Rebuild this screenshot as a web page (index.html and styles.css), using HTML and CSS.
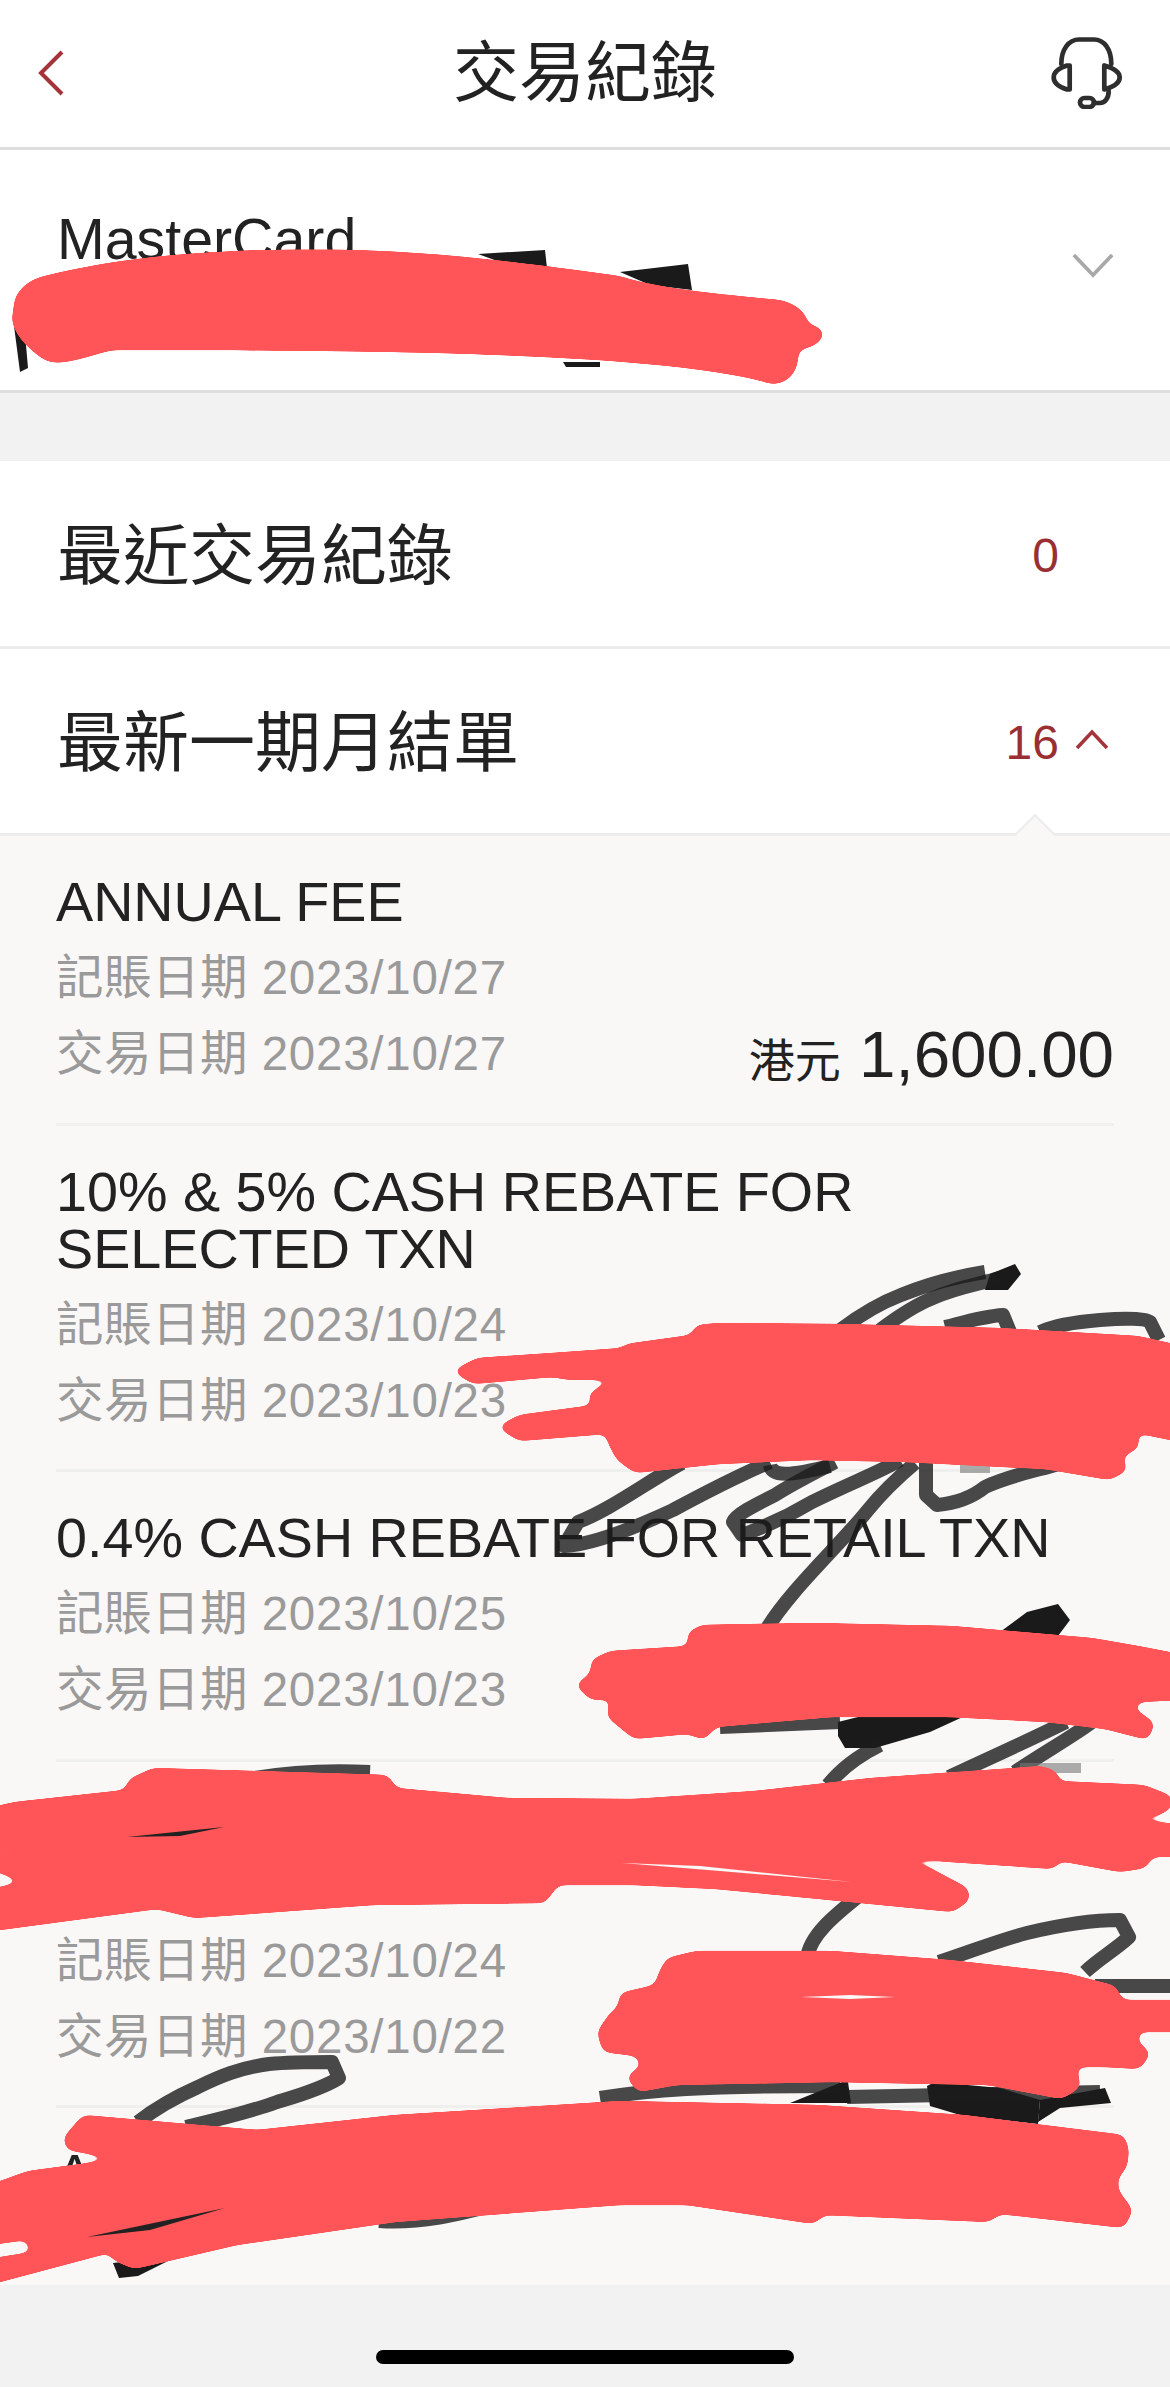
FILE: index.html
```html
<!DOCTYPE html>
<html lang="zh-Hant">
<head>
<meta charset="utf-8">
<title>交易紀錄</title>
<link rel="stylesheet" href="styles.css">
</head>
<body>
<div class="page">
  <header class="nav">
    <svg class="nav-back" viewBox="0 0 26 46" width="26" height="46"><path d="M24 2 L3 23 L24 44" fill="none" stroke="#a5343a" stroke-width="4"/></svg>
    <h1 class="nav-title">交易紀錄</h1>
    <svg class="nav-help" viewBox="0 0 72 72" width="72" height="72"><g fill="none" stroke="#2e2e2e" stroke-width="4.7" stroke-linecap="round" stroke-linejoin="round"><path d="M10.3 27 C10.3 12 18 2.5 28 2.5 H43 C53 2.5 60.3 12 60.3 27"/><path d="M18.7 28.5 V52.5 H16 C8 50 2.7 46 2.7 40.5 C2.7 35 8 31 16 28.5Z"/><path d="M53.3 28.5 V52.5 C62 50 68.7 46 68.7 40.5 C68.7 35 62 31 53.3 28.5Z"/><path d="M57.7 54 C57.7 61 54 66 49 66 H42.7"/><rect x="29" y="61" width="14" height="9" rx="4.5"/></g></svg>
  </header>

  <section class="card-select">
    <span class="card-name">MasterCard</span>
    <svg class="chev-gray" viewBox="0 0 46 28" width="42" height="26"><path d="M2 3 L23 25 L44 3" fill="none" stroke="#a8a8a8" stroke-width="4"/></svg>
  </section>

  <section class="group">
    <div class="summary summary-first">
      <span class="summary-label">最近交易紀錄</span>
      <span class="summary-count count-plain">0</span>
    </div>
    <div class="summary summary-second">
      <span class="summary-label">最新一期月結單</span>
      <span class="summary-count">16</span>
      <svg class="chev-red" viewBox="0 0 34 22" width="34" height="22"><path d="M2 20 L17 4 L32 20" fill="none" stroke="#a5343a" stroke-width="3.5"/></svg>
      <span class="notch"></span>
    </div>
  </section>

  <main class="list">
    <article class="row">
      <div class="row-title">ANNUAL FEE</div>
      <div class="row-date">記賬日期 <span class="row-num">2023/10/27</span></div>
      <div class="row-bottom">
        <div class="row-date">交易日期 <span class="row-num">2023/10/27</span></div>
        <div class="amount"><span class="currency">港元</span> 1,600.00</div>
      </div>
    </article>
    <article class="row">
      <div class="row-title">10% &amp; 5% CASH REBATE FOR<br>SELECTED TXN</div>
      <div class="row-date">記賬日期 <span class="row-num">2023/10/24</span></div>
      <div class="row-date">交易日期 <span class="row-num">2023/10/23</span></div>
    </article>
    <article class="row">
      <div class="row-title">0.4% CASH REBATE FOR RETAIL TXN</div>
      <div class="row-date">記賬日期 <span class="row-num">2023/10/25</span></div>
      <div class="row-date">交易日期 <span class="row-num">2023/10/23</span></div>
    </article>
    <article class="row">
      <div class="row-title">&nbsp;<br>&nbsp;</div>
      <div class="row-date">記賬日期 <span class="row-num">2023/10/24</span></div>
      <div class="row-date">交易日期 <span class="row-num">2023/10/22</span></div>
    </article>
    <article class="row row-last">
      <div class="row-title">A</div>
    </article>
  </main>

  <footer class="home"><span class="home-bar"></span></footer>

  <svg class="scribble" viewBox="0 0 1170 2387" width="1170" height="2387" aria-hidden="true">
    <defs>
      <filter id="soft" filterUnits="userSpaceOnUse" x="-60" y="0" width="1300" height="2387" color-interpolation-filters="sRGB">
        <feGaussianBlur stdDeviation="5"/>
        <feColorMatrix type="matrix" values="1 0 0 0 0  0 1 0 0 0  0 0 1 0 0  0 0 0 22 -10"/>
      </filter>
    </defs>
    <g class="ink-fill">
      <path d="M478 254 L545 250 L547 268 L500 262Z"/>
      <path d="M620 272 L688 264 L692 290 L650 285Z"/>
      <path d="M14 326 L28 326 L26 345 L28 368 L20 372Z"/>
      <path d="M563 362 L600 362 L600 367 L566 367Z"/>
      <path d="M990 1274 L1015 1264 L1021 1274 L1008 1290 L985 1290Z"/>
      <path d="M1000 1632 L1027 1612 L1058 1604 L1070 1620 L1058 1636 L1030 1638Z"/>
      <path d="M838 1722 L870 1714 L965 1716 L930 1732 L875 1748 L845 1748 L838 1736Z"/>
      <path d="M842 2082 L848 2082 L851 2103 L790 2103Z"/>
      <path d="M927 2086 L935 2082 L1000 2088 L1040 2100 L1038 2124 L960 2115 L930 2106Z"/>
      <path d="M1040 2100 L1105 2088 L1111 2103 L1060 2108 L1038 2122Z"/>
      <path d="M113 2263 L180 2255 L138 2276 L119 2278Z"/>
    </g>
    <g class="ink">
      <path d="M840 1330 C860 1315 880 1303 901 1295 C930 1283 960 1276 985 1272"/>
      <path d="M880 1330 C900 1315 915 1305 933 1298 C955 1288 975 1285 1000 1278"/>
      <path d="M945 1327 C965 1322 985 1316 1003 1315 L1010 1332"/>
      <path d="M1040 1332 C1055 1325 1075 1322 1100 1320 C1125 1318 1145 1318 1150 1322 L1159 1340"/>
      <path d="M682 1463 C650 1480 610 1510 578 1522 L564 1546 C590 1545 630 1530 673 1510 C710 1490 740 1475 770 1462"/>
      <path d="M770 1465 C772 1477 790 1476 830 1466"/>
      <path d="M835 1462 C810 1475 790 1485 775 1495 C755 1505 735 1515 733 1522 L742 1535 C770 1525 790 1515 812 1502 C850 1483 880 1472 900 1460"/>
      <path d="M915 1463 C895 1480 880 1495 868 1510 C840 1545 790 1590 766 1630"/>
      <path d="M926 1462 L926 1495 L937 1505 C960 1503 975 1495 985 1487 C1010 1475 1040 1470 1062 1463"/>
      <path d="M840 1722 L720 1727"/>
      <path d="M828 1785 C840 1770 860 1755 880 1745"/>
      <path d="M949 1777 C985 1760 1030 1740 1066 1722"/>
      <path d="M1015 1772 C1040 1755 1075 1735 1092 1722"/>
      <path d="M860 1895 C835 1915 810 1935 807 1958"/>
      <path d="M880 1855 L915 1865"/>
      <path d="M939 1962 C975 1950 1000 1940 1027 1933 C1060 1925 1090 1920 1120 1920 L1129 1937 C1115 1950 1100 1958 1085 1972"/>
      <path d="M1095 1986 L1175 1986"/>
      <path d="M600 2098 C650 2090 700 2086 840 2086"/>
      <path d="M847 2097 L1100 2092"/>
      <path d="M255 1778 C290 1772 330 1770 370 1772"/>
      <path d="M138 2122 C160 2105 180 2095 198 2087 C220 2076 240 2068 269 2064 C290 2062 310 2062 332 2062 L339 2078 C320 2090 290 2098 277 2102 C250 2112 215 2120 186 2127"/>
      <path d="M379 2221 C420 2224 460 2214 494 2205"/>
    </g>
    <path class="ink-light" d="M960 1468 L990 1468"/>
    <path class="ink-light" d="M1020 1768 L1081 1768"/>
    <g class="paint" filter="url(#soft)">
      <path d="M45 276 C130 255 230 248 350 250 C450 252 560 268 619 276 C650 286 690 292 780 300 C800 305 808 315 808 325 C830 325 830 345 798 350 C800 370 790 384 772 384 C720 368 620 360 522 356 C400 350 200 350 112 350 C90 355 60 368 45 360 C15 340 8 320 14 310 C12 295 25 280 45 276 Z"/>
      <path d="M452 1371 L477 1358 L552 1353 L622 1348 L626 1344 L691 1335 L696 1325 L719 1323 L840 1324 L999 1328 L1138 1336 L1200 1350 L1200 1398 L1170 1399 L1159 1403 L1200 1412 L1200 1446 L1136 1433 L1140 1447 L1122 1457 L1128 1470 L1110 1480 L1045 1469 L905 1462 L812 1460 L719 1464 L635 1473 L617 1460 L608 1443 L606 1434 L519 1441 L497 1427 L519 1415 L594 1405 L587 1395 L603 1385 L677 1380 L668 1379 L570 1380 L552 1377 L473 1384 Z"/>
      <path d="M687 1633 L701 1625 L812 1623 L952 1626 L1092 1638 L1138 1646 L1200 1658 L1200 1699 L1140 1702 L1132 1707 L1155 1723 L1148 1740 L1105 1729 L1046 1722 L949 1717 L832 1717 L716 1727 L704 1740 L688 1734 L634 1739 L607 1717 L609 1702 L630 1699 L591 1700 L575 1685 L591 1673 L591 1660 L610 1651 L689 1646 Z"/>
      <path d="M153 1768 L388 1775 L396 1788 L507 1798 L634 1799 L755 1791 L871 1778 L1042 1766 L1058 1772 L1058 1781 L1144 1785 L1172 1796 L1172 1808 L1159 1815 L1110 1818 L1200 1826 L1200 1856 L1152 1857 L1146 1868 L1120 1872 L1060 1861 L1054 1869 L950 1862 L880 1856 L930 1868 L968 1888 L970 1900 L953 1912 L871 1904 L716 1889 L634 1885 L558 1885 L545 1903 L373 1905 L194 1918 L157 1909 L-30 1934 L-30 1893 L24 1882 L-30 1862 L-30 1856 L28 1852 L-30 1844 L-30 1812 L15 1802 L125 1790 L129 1779 Z"/>
      <path d="M667 1958 L696 1951 L832 1951 L949 1960 L1066 1973 L1116 1986 L1122 2000 L1200 2000 L1200 2032 L1138 2032 L1138 2042 L1151 2053 L1140 2069 L1105 2067 L1076 2067 L1081 2087 L1062 2099 L988 2085 L832 2082 L677 2085 L638 2092 L626 2077 L642 2065 L636 2056 L603 2052 L597 2032 L610 2013 L618 2007 L620 1993 L655 1985 L659 1972 Z"/>
      <path d="M63 2138 L83 2115 L257 2130 L395 2115 L620 2101 L818 2105 L964 2115 L1124 2135 L1129 2150 L1127 2167 L1118 2178 L1118 2190 L1133 2210 L1124 2228 L1000 2214 L989 2222 L824 2215 L814 2224 L687 2205 L620 2205 L395 2222 L237 2245 L134 2269 L113 2260 L109 2253 L-30 2290 L-30 2262 L32 2252 L26 2240 L-30 2248 L-30 2192 L28 2171 L119 2159 L67 2150 Z"/>
    </g>
    <path class="gap" d="M622 1863 L700 1866 L852 1882 L720 1871Z"/>
    <path class="gap" d="M801 1997 L850 1995 L895 1997 L850 1999Z"/>
    <path class="gap gap-dark" d="M127 1837 L224 1827 L180 1836Z"/>
    <path class="gap gap-dark" d="M87 2237 L225 2208 L150 2230Z"/>
  </svg>
</div>
</body>
</html>
```

FILE: styles.css
```css
* { box-sizing: border-box; margin: 0; padding: 0; }
html, body { width: 1170px; height: 2387px; overflow: hidden; background: #f2f2f2; }
body { font-family: "Liberation Sans", "Noto Sans CJK TC", sans-serif; color: #222; }
.page { position: relative; width: 1170px; height: 2387px; display: flex; flex-direction: column; }

.nav { height: 150px; flex: none; display: flex; align-items: center; justify-content: space-between; padding: 0 47px 2px 38px; background: #fff; border-bottom: 3px solid #dedede; position: relative; }
.nav-title { font-size: 66px; font-weight: 400; line-height: 1; position: absolute; left: 0; right: 0; text-align: center; color: #222; }

.card-select { height: 243px; flex: none; display: flex; align-items: center; justify-content: space-between; padding: 0 56px 0 57px; background: #fff; border-bottom: 3px solid #dedede; }
.card-name { font-size: 57.3px; line-height: 57px; align-self: flex-start; margin-top: 61px; }
.chev-gray { margin-bottom: 10px; }

.group { margin-top: 68px; background: #fff; flex: none; }
.summary { position: relative; display: flex; align-items: center; padding: 4px 61px 0 57px; border-bottom: 3px solid #ececec; }
.summary-first { height: 188px; }
.summary-second { height: 187px; }
.summary-label { font-size: 66px; line-height: 1; flex: 1; color: #222; }
.summary-count { font-size: 48px; line-height: 1; color: #9a2f33; }
.count-plain { margin-right: 50px; }
.chev-red { margin-left: 16px; margin-bottom: 8px; }
.notch { position: absolute; right: 120px; bottom: -17px; width: 30px; height: 30px; background: #faf7f7; transform: rotate(45deg); border-left: 2px solid #ececec; border-top: 2px solid #ececec; }

.list { flex: none; height: 1449px; padding: 0 56px; background: #faf7f7; overflow: hidden; }
.row { padding: 38px 0 30.5px; border-bottom: 3px solid #efefed; }
.row-last { border-bottom: 0; }
.row-title { font-size: 55.7px; line-height: 57px; color: #222; }
.row-date { font-size: 47.5px; letter-spacing: .5px; line-height: 76px; color: #9a9a9a; }
.row-num { letter-spacing: .75px; }
.row-title + .row-date { margin-top: 9px; }
.row-bottom { display: flex; justify-content: space-between; align-items: flex-start; height: 76px; }
.amount { font-size: 65.5px; line-height: 76px; margin-top: 1px; color: #222; }
.currency { font-size: 46px; }

.home { flex: 1; display: flex; justify-content: center; background: #f2f2f2; padding-top: 65px; }
.home-bar { width: 418px; height: 14px; border-radius: 7px; background: #000; }

.scribble { position: absolute; left: 0; top: 0; pointer-events: none; }
.ink { fill: none; stroke: #1c1c1c; stroke-opacity: .8; stroke-width: 14; stroke-linejoin: round; }
.ink-fill { fill: #1a1a1a; }
.ink-light { fill: none; stroke: #777; stroke-opacity: .6; stroke-width: 10; }
.paint { fill: #ff5558; }
.gap { fill: #faf7f7; }
.gap-dark { fill: #222; }
```
